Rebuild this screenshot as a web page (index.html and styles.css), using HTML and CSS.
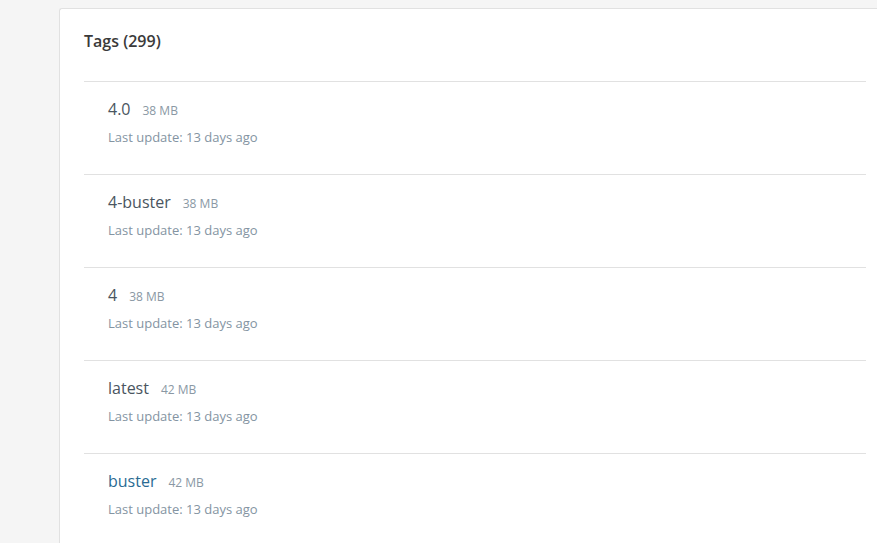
FILE: index.html
```html
<!DOCTYPE html>
<html lang="en">
<head>
<title>Tags</title>
<meta charset="UTF-8">
<meta name="viewport" content="width=device-width, initial-scale=1.0">
<link rel="stylesheet" href="styles.css">
</head>
<body>

<div class="tags-card">
  <h3 class="tags-title">Tags (299)</h3>
  <ul class="tag-list">
    <li>
      <div class="tag-head"><span class="tag-name">4.0</span><span class="tag-size">38 MB</span></div>
      <div class="tag-date">Last update: 13 days ago</div>
    </li>
    <li>
      <div class="tag-head"><span class="tag-name">4-buster</span><span class="tag-size">38 MB</span></div>
      <div class="tag-date">Last update: 13 days ago</div>
    </li>
    <li>
      <div class="tag-head"><span class="tag-name">4</span><span class="tag-size">38 MB</span></div>
      <div class="tag-date">Last update: 13 days ago</div>
    </li>
    <li>
      <div class="tag-head"><span class="tag-name">latest</span><span class="tag-size">42 MB</span></div>
      <div class="tag-date">Last update: 13 days ago</div>
    </li>
    <li>
      <div class="tag-head"><span class="tag-name visited">buster</span><span class="tag-size">42 MB</span></div>
      <div class="tag-date">Last update: 13 days ago</div>
    </li>
  </ul>
</div>

</body>
</html>
```

FILE: styles.css
```css
body {
  font-family: "Open Sans", sans-serif;
  background: #f5f5f5;
  margin: 0;
  padding: 8px 0 0 59px;
  overflow: hidden;
}

.tags-card {
  background: #fff;
  border: 1px solid #e1e1e1;
  border-right: none;
  border-radius: 3px 0 0 0;
  padding: 21px 0 0 24px;
  min-height: 600px;
}

.tags-title {
  margin: 0 0 29px;
  font-size: 16px;
  line-height: 22px;
  font-weight: 600;
  color: #3a3a3a;
}

.tag-list {
  list-style: none;
  margin: 0;
  padding: 0;
  width: 782px;
}

.tag-list li {
  border-top: 1px solid #e1e1e1;
  padding: 16px 24px 28px;
}

.tag-head {
  display: flex;
  align-items: baseline;
  height: 22px;
}

.tag-name {
  font-size: 16px;
  line-height: 22px;
  color: #4a5560;
}

.tag-name.visited {
  color: #2a6b93;
}

.tag-size {
  margin-left: 12px;
  font-size: 12px;
  color: #8a98a4;
}

.tag-date {
  margin-top: 8px;
  font-size: 13px;
  line-height: 18px;
  color: #8494a2;
}
```
